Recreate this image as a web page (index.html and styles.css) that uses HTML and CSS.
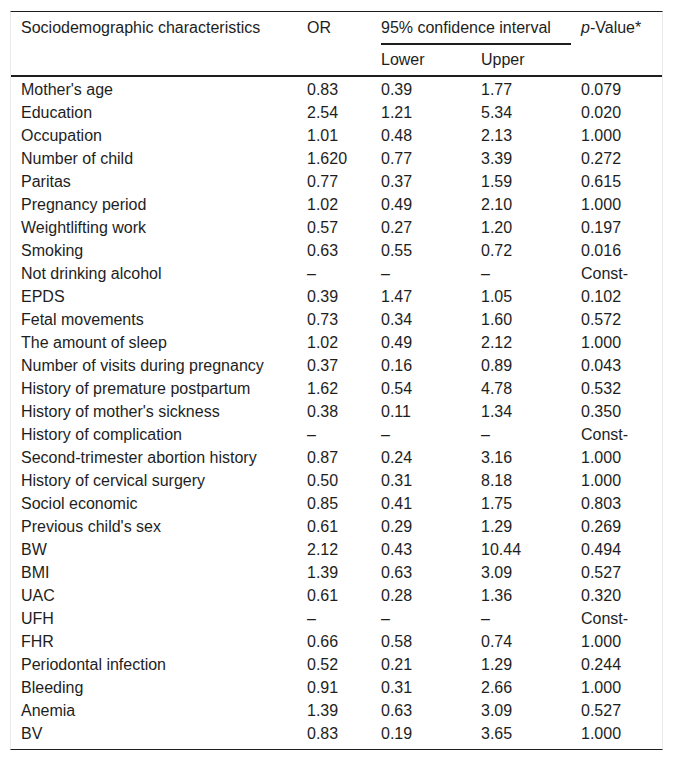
FILE: index.html
```html
<!DOCTYPE html>
<html>
<head>
<meta charset="utf-8">
<link rel="stylesheet" href="styles.css">
</head>
<body>
<table class="data">
  <colgroup>
    <col class="c1"><col class="c2"><col class="c3"><col class="c4"><col class="c5">
  </colgroup>
  <thead>
    <tr class="h1">
      <th rowspan="2" class="top">Sociodemographic characteristics</th>
      <th rowspan="2" class="top">OR</th>
      <th colspan="2" class="ci"><div class="ci-label">95% confidence interval</div></th>
      <th rowspan="2" class="top"><i>p</i>-Value*</th>
    </tr>
    <tr class="h2">
      <th>Lower</th>
      <th>Upper</th>
    </tr>
  </thead>
  <tbody>
    <tr><td>Mother's age</td><td>0.83</td><td>0.39</td><td>1.77</td><td>0.079</td></tr>
    <tr><td>Education</td><td>2.54</td><td>1.21</td><td>5.34</td><td>0.020</td></tr>
    <tr><td>Occupation</td><td>1.01</td><td>0.48</td><td>2.13</td><td>1.000</td></tr>
    <tr><td>Number of child</td><td>1.620</td><td>0.77</td><td>3.39</td><td>0.272</td></tr>
    <tr><td>Paritas</td><td>0.77</td><td>0.37</td><td>1.59</td><td>0.615</td></tr>
    <tr><td>Pregnancy period</td><td>1.02</td><td>0.49</td><td>2.10</td><td>1.000</td></tr>
    <tr><td>Weightlifting work</td><td>0.57</td><td>0.27</td><td>1.20</td><td>0.197</td></tr>
    <tr><td>Smoking</td><td>0.63</td><td>0.55</td><td>0.72</td><td>0.016</td></tr>
    <tr><td>Not drinking alcohol</td><td>–</td><td>–</td><td>–</td><td>Const-</td></tr>
    <tr><td>EPDS</td><td>0.39</td><td>1.47</td><td>1.05</td><td>0.102</td></tr>
    <tr><td>Fetal movements</td><td>0.73</td><td>0.34</td><td>1.60</td><td>0.572</td></tr>
    <tr><td>The amount of sleep</td><td>1.02</td><td>0.49</td><td>2.12</td><td>1.000</td></tr>
    <tr><td>Number of visits during pregnancy</td><td>0.37</td><td>0.16</td><td>0.89</td><td>0.043</td></tr>
    <tr><td>History of premature postpartum</td><td>1.62</td><td>0.54</td><td>4.78</td><td>0.532</td></tr>
    <tr><td>History of mother's sickness</td><td>0.38</td><td>0.11</td><td>1.34</td><td>0.350</td></tr>
    <tr><td>History of complication</td><td>–</td><td>–</td><td>–</td><td>Const-</td></tr>
    <tr><td>Second-trimester abortion history</td><td>0.87</td><td>0.24</td><td>3.16</td><td>1.000</td></tr>
    <tr><td>History of cervical surgery</td><td>0.50</td><td>0.31</td><td>8.18</td><td>1.000</td></tr>
    <tr><td>Sociol economic</td><td>0.85</td><td>0.41</td><td>1.75</td><td>0.803</td></tr>
    <tr><td>Previous child's sex</td><td>0.61</td><td>0.29</td><td>1.29</td><td>0.269</td></tr>
    <tr><td>BW</td><td>2.12</td><td>0.43</td><td>10.44</td><td>0.494</td></tr>
    <tr><td>BMI</td><td>1.39</td><td>0.63</td><td>3.09</td><td>0.527</td></tr>
    <tr><td>UAC</td><td>0.61</td><td>0.28</td><td>1.36</td><td>0.320</td></tr>
    <tr><td>UFH</td><td>–</td><td>–</td><td>–</td><td>Const-</td></tr>
    <tr><td>FHR</td><td>0.66</td><td>0.58</td><td>0.74</td><td>1.000</td></tr>
    <tr><td>Periodontal infection</td><td>0.52</td><td>0.21</td><td>1.29</td><td>0.244</td></tr>
    <tr><td>Bleeding</td><td>0.91</td><td>0.31</td><td>2.66</td><td>1.000</td></tr>
    <tr><td>Anemia</td><td>1.39</td><td>0.63</td><td>3.09</td><td>0.527</td></tr>
    <tr class="last"><td>BV</td><td>0.83</td><td>0.19</td><td>3.65</td><td>1.000</td></tr>
  </tbody>
</table>
</body>
</html>
```
FILE: styles.css
```css
html, body {
  margin: 0;
  padding: 0;
  background: #fff;
}
body {
  padding: 11px 0 0 10px;
  font-family: "Liberation Sans", Arial, sans-serif;
  font-size: 16px;
  color: #1e1e1e;
}
.data {
  width: 653px;
  table-layout: fixed;
  border-collapse: separate;
  border-spacing: 0;
  border-top: 1px solid #1e1e1e;
  border-bottom: 1px solid #1e1e1e;
  border-left: 1px solid #ebebeb;
  border-right: 1px solid #ebebeb;
}
.c1 { width: 286px; }
.c2 { width: 74px; }
.c3 { width: 100px; }
.c4 { width: 100px; }
.c5 { width: 91px; }
th, td {
  text-align: left;
  font-weight: normal;
  padding: 0 0 0 10px;
  white-space: nowrap;
}
.top {
  vertical-align: top;
  line-height: 31px;
  border-bottom: 2px solid #1e1e1e;
}
.ci {
  vertical-align: top;
  padding: 0 0 0 10px;
}
.ci-label {
  line-height: 31px;
  border-bottom: 2px solid #1e1e1e;
}
.h2 th {
  height: 30px;
  line-height: 30px;
  vertical-align: middle;
  border-bottom: 2px solid #1e1e1e;
}
td {
  line-height: 23px;
  vertical-align: top;
}
tbody tr:first-child td {
  padding-top: 1px;
}
.last td {
  padding-bottom: 4px;
}
```
